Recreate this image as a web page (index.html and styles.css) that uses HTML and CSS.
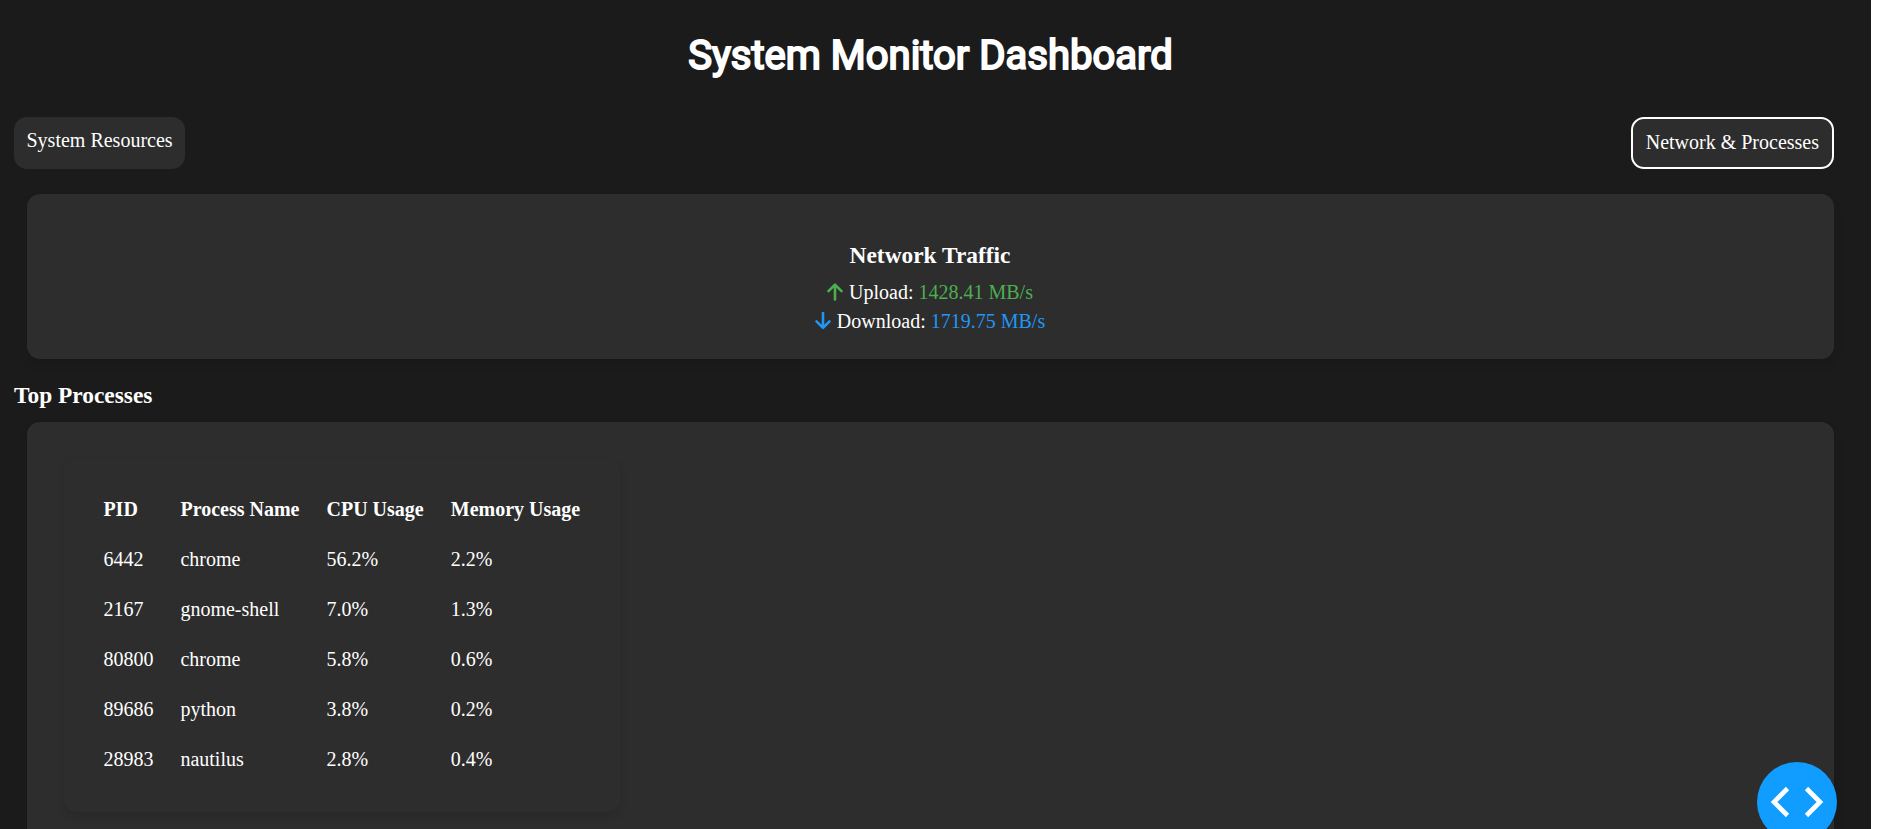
FILE: index.html
```
<!DOCTYPE html>
<html lang="en">
<head>
<meta charset="utf-8">
<title>System Monitor Dashboard</title>
<link rel="stylesheet" href="styles.css">
</head>
<body>
<main class="dashboard">
  <h1 class="title">System Monitor Dashboard</h1>
  <nav class="tabs">
    <div class="tab">System Resources</div>
    <div class="tab tab-active">Network &amp; Processes</div>
  </nav>
  <section class="card network">
    <h3 class="heading">Network Traffic</h3>
    <div class="line"><svg class="arrow up" viewBox="0 0 16 18"><path d="M8 16.500V2M1.500 8.200L8 1.700l6.500 6.500"/></svg><span>Upload: <span class="upload">1428.41 MB/s</span></span></div>
    <div class="line"><svg class="arrow down" viewBox="0 0 16 18"><path d="M8 1V15.500M1.500 9.300L8 15.800l6.500-6.500"/></svg><span>Download: <span class="download">1719.75 MB/s</span></span></div>
  </section>
  <h3 class="heading section-heading">Top Processes</h3>
  <section class="card processes">
    <div class="table-card">
      <table class="table">
        <thead><tr><th>PID</th><th>Process Name</th><th>CPU Usage</th><th>Memory Usage</th></tr></thead>
        <tbody>
          <tr><td>6442</td><td>chrome</td><td>56.2%</td><td>2.2%</td></tr>
          <tr><td>2167</td><td>gnome-shell</td><td>7.0%</td><td>1.3%</td></tr>
          <tr><td>80800</td><td>chrome</td><td>5.8%</td><td>0.6%</td></tr>
          <tr><td>89686</td><td>python</td><td>3.8%</td><td>0.2%</td></tr>
          <tr><td>28983</td><td>nautilus</td><td>2.8%</td><td>0.4%</td></tr>
        </tbody>
      </table>
    </div>
  </section>
</main>
<div class="debug"><svg viewBox="0 0 80 80"><path d="M30.500 26.500L17 40l13.500 13.500M49.500 26.500L63 40 49.500 53.500"/></svg></div>
</body>
</html>
```
FILE: styles.css
```
* { box-sizing: border-box; }
html { background: #fff; overflow: hidden; }
body { margin: 0; height: 829px; overflow: hidden; font: 20px/23px "Liberation Serif", serif; color: #fff; }
.dashboard { width: 1871px; height: 829px; padding: 27px 37px 0 14px; background: #1b1b1b; overflow: hidden; }
.title { margin: 0 0 32px 13px; font: 400 40px/58px Roboto, sans-serif; -webkit-text-stroke: 2px #fff; text-align: center; }
.tabs { display: flex; justify-content: space-between; height: 52px; margin-bottom: 25px; }
.tab { padding: 12px 12.500px; border-radius: 13px; background: #2d2d2d; white-space: nowrap; }
.tab-active { padding: 12px 13px; border: 2px solid #fff; }
.card { margin-left: 13px; border-radius: 13px; background: #2d2d2d; box-shadow: 0 5px 10px rgba(0, 0, 0, .1); }
.network { height: 165px; padding: 47px 1px 0 0; text-align: center; }
.heading { margin: 0; font-size: 23.4px; line-height: 28px; }
.line { display: flex; justify-content: center; gap: 6px; height: 29px; line-height: 29px; }
.network .heading { margin-bottom: 9px; }
.arrow { width: 16px; height: 18px; margin-top: 5px; fill: none; stroke-width: 2.6; stroke-linecap: round; stroke-linejoin: round; }
.up { stroke: #4caf50; }
.down { stroke: #2196f3; }
.upload { color: #4caf50; }
.download { color: #2196f3; }
.section-heading { margin: 22px 0 13px; }
.processes { height: 440px; padding: 36.500px; }
.table-card { width: max-content; padding: 26px 26.400px 27px; border-radius: 13px; background: #2d2d2d; box-shadow: 0 5px 10px rgba(0, 0, 0, .1); }
.table { border-collapse: collapse; }
.table th, .table td { height: 50px; padding: 0 13.530px; text-align: left; white-space: nowrap; }
.debug { position: fixed; left: 1757px; top: 762px; width: 80px; height: 80px; border-radius: 50%; background: #119dff; }
.debug svg { display: block; fill: none; stroke: #fff; stroke-width: 4.6; }
```
